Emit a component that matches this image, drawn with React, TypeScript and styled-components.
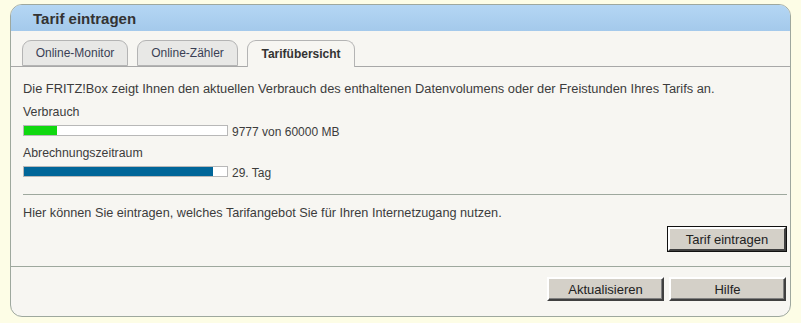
import React from "react";
import styled, { createGlobalStyle } from "styled-components";

const Global = createGlobalStyle`
  html, body { margin: 0; padding: 0; background: #fdfde6; }
  body { font-family: "Liberation Sans", Arial, sans-serif; color: #3c3c3c; }
  * { box-sizing: border-box; }
`;

const Page = styled.div`
  padding: 4px 10px 0 10px;
`;

const Panel = styled.div`
  width: 781px;
  height: 313px;
  border: 1px solid #9ea89e;
  border-radius: 12px;
  background: #f7f6f2;
  overflow: hidden;
  display: flex;
  flex-direction: column;
`;

const Header = styled.div`
  height: 26px;
  background: linear-gradient(#b4d6f4, #a4c9eb);
  padding-left: 22px;
  display: flex;
  align-items: center;
  font-size: 15px;
  font-weight: bold;
  color: #333;
`;

const TabRow = styled.div`
  display: flex;
  gap: 9px;
  padding: 9px 0 0 11px;
  border-bottom: 1px solid #a8a8a8;
  height: 36px;
`;

const Tab = styled.div<{ $active?: boolean; $w: number }>`
  width: ${(p) => p.$w}px;
  height: ${(p) => (p.$active ? 27 : 26)}px;
  margin-bottom: ${(p) => (p.$active ? -1 : 0)}px;
  border: 1px solid #b4b4b4;
  border-bottom: ${(p) => (p.$active ? "none" : "1px solid #b4b4b4")};
  border-radius: 9px 9px 0 0;
  background: ${(p) => (p.$active ? "#f7f6f2" : "#e8e8e6")};
  display: flex;
  align-items: center;
  justify-content: center;
  font-size: 12px;
  font-weight: ${(p) => (p.$active ? "bold" : "normal")};
  color: ${(p) => (p.$active ? "#333" : "#3a3f55")};
  padding-bottom: 1px;
`;

const Content = styled.div`
  padding: 14px 3px 0 11px;
  font-size: 12px;
  line-height: 16px;
`;

const Text = styled.div<{ $mt?: number; $size?: number }>`
  margin-top: ${(p) => p.$mt ?? 0}px;
  font-size: ${(p) => p.$size ?? 12}px;
  padding-left: 1px;
  white-space: nowrap;
`;

const BarRow = styled.div<{ $mt?: number }>`
  display: flex;
  align-items: flex-start;
  gap: 4px;
  height: 16px;
  margin-top: ${(p) => p.$mt ?? 0}px;
  padding-left: 1px;
`;

const Bar = styled.div`
  width: 205px;
  height: 11px;
  margin-top: 4px;
  border: 1px solid #b8b8b8;
  background: #fff;
  display: flex;
`;

const Fill = styled.div<{ $color: string }>`
  height: 100%;
  background: ${(p) => p.$color};
`;

const BarValue = styled.span`
  margin-top: 3px;
  white-space: nowrap;
`;

const Divider = styled.div`
  height: 1px;
  background: #9ea89e;
  margin-top: 16px;
  margin-left: 1px;
`;

const ActionRow = styled.div`
  display: flex;
  justify-content: flex-end;
  padding-right: 1px;
  margin-top: 6px;
`;

const Button = styled.button<{ $default?: boolean }>`
  width: ${(p) => (p.$default ? 118 : 117)}px;
  height: 24px;
  font-family: "Liberation Sans", Arial, sans-serif;
  font-size: 13px;
  color: #222;
  background: #d4d0c8;
  border-style: solid;
  border-width: 2px;
  border-color: #fff #404040 #404040 #fff;
  box-shadow: ${(p) => (p.$default ? "0 0 0 1px #111" : "inset -1px -1px 0 #808080")};
  padding: 0;
  outline: none;
`;

const Footer = styled.div`
  margin-top: auto;
  height: 50px;
  border-top: 1px solid #9ea89e;
  display: flex;
  justify-content: flex-end;
  gap: 5px;
  padding: 10px 4px 0 0;
`;

export default function App() {
  return (
    <>
      <Global />
      <Page>
        <Panel>
          <Header>Tarif eintragen</Header>
          <TabRow>
            <Tab $w={106}>Online-Monitor</Tab>
            <Tab $w={101}>Online-Zähler</Tab>
            <Tab $w={108} $active>
              Tarifübersicht
            </Tab>
          </TabRow>
          <Content>
            <Text $size={12.85}>
              Die FRITZ!Box zeigt Ihnen den aktuellen Verbrauch des enthaltenen
              Datenvolumens oder der Freistunden Ihres Tarifs an.
            </Text>
            <Text $mt={7} $size={12.4}>
              Verbrauch
            </Text>
            <BarRow $mt={1}>
              <Bar>
                <Fill $color="#10d810" style={{ width: `${(9777 / 60000) * 100}%` }} />
              </Bar>
              <BarValue>9777 von 60000 MB</BarValue>
            </BarRow>
            <Text $mt={8} $size={12.3}>
              Abrechnungszeitraum
            </Text>
            <BarRow $mt={1}>
              <Bar>
                <Fill $color="#006699" style={{ width: `${(28 / 30) * 100}%` }} />
              </Bar>
              <BarValue>29. Tag</BarValue>
            </BarRow>
            <Divider />
            <Text $mt={10} $size={12.7}>
              Hier können Sie eintragen, welches Tarifangebot Sie für Ihren
              Internetzugang nutzen.
            </Text>
            <ActionRow>
              <Button $default>Tarif eintragen</Button>
            </ActionRow>
          </Content>
          <Footer>
            <Button>Aktualisieren</Button>
            <Button>Hilfe</Button>
          </Footer>
        </Panel>
      </Page>
    </>
  );
}
